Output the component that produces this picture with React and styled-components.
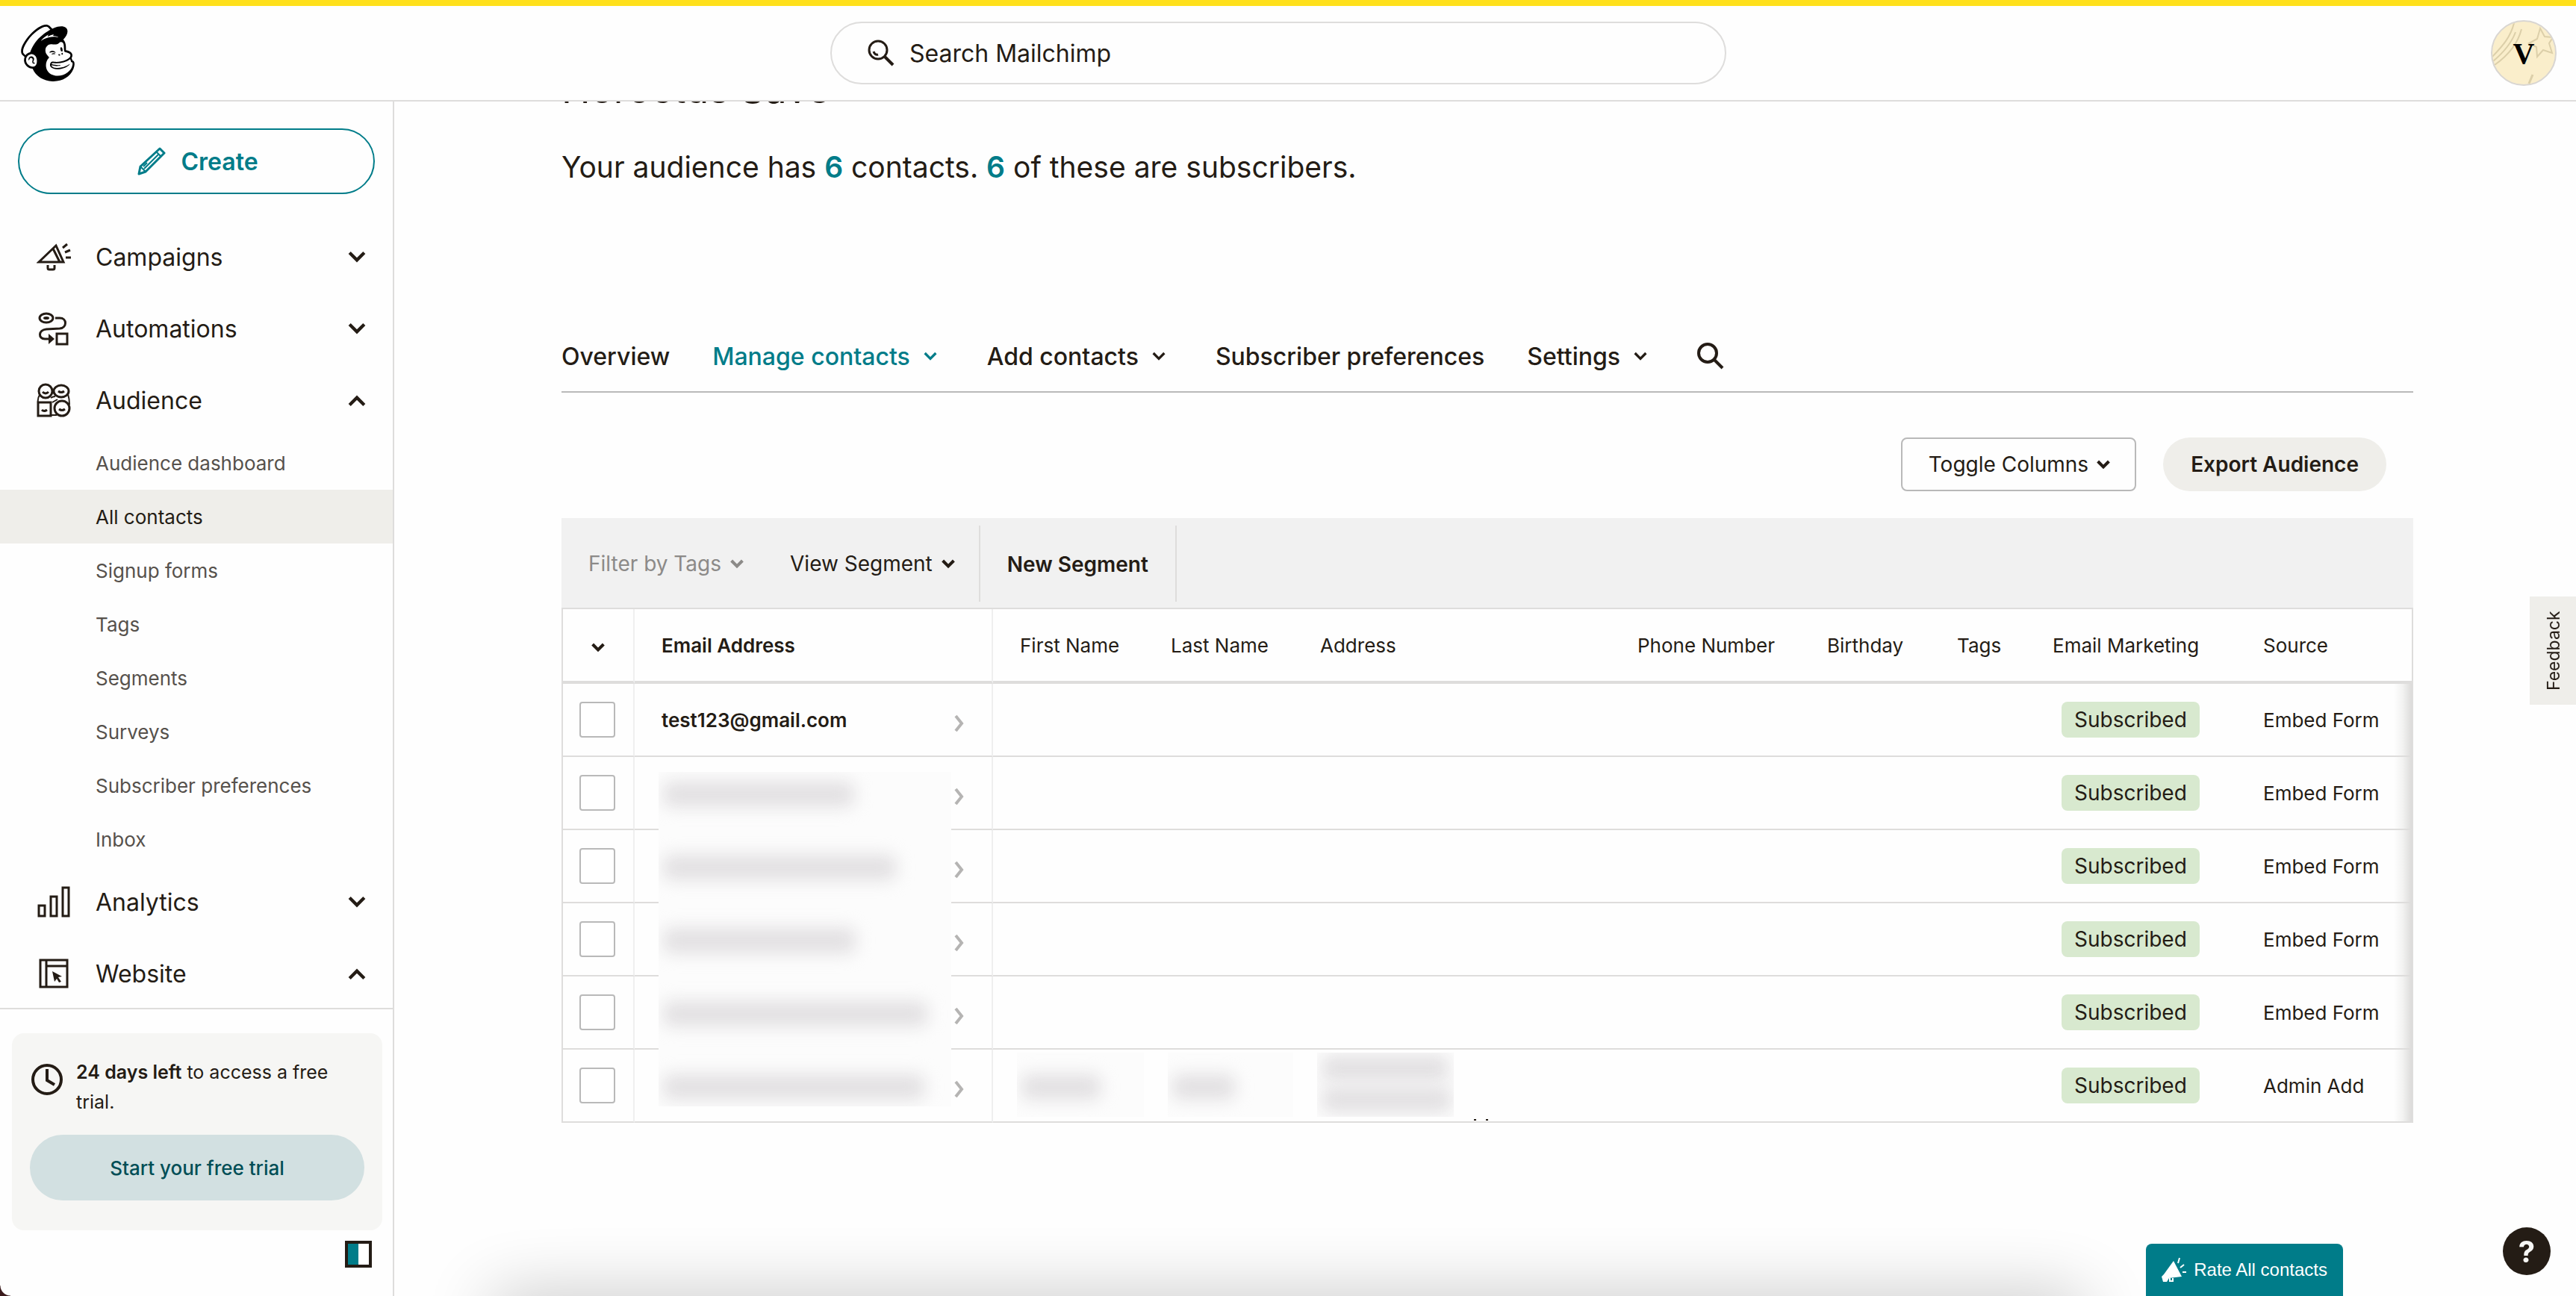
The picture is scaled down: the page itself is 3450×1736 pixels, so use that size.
import React from "react";
import styled, { createGlobalStyle } from "styled-components";
import { SiMailchimp } from "react-icons/si";

const ink = "#241c15";
const teal = "#007c89";
const line = "#dedddc";
const edge = "#b9b9b9";

const GlobalStyle = createGlobalStyle`
  *, *::before, *::after { box-sizing: border-box; }
  html, body, #root { height: 100%; }
  body {
    margin: 0;
    background: #fefefe;
    color: ${ink};
    font-family: Inter, "Liberation Sans", sans-serif;
    font-size: 26px;
    overflow: hidden;
  }
  button, input { font: inherit; color: inherit; }
  button { border: 0; background: none; padding: 0; cursor: pointer; }
  a { color: inherit; text-decoration: none; }
  h1, p, ul { margin: 0; padding: 0; }
  ul { list-style: none; }
  svg { display: block; flex: none; }
`;

/* ---------- shell ---------- */

const Page = styled.div`
  height: 100vh;
  display: flex;
  flex-direction: column;
`;

const Header = styled.header`
  flex: none;
  height: 136px;
  border-top: 8px solid #ffe01b;
  border-bottom: 2px solid ${line};
  padding-right: 26px;
  display: grid;
  grid-template-columns: 1fr 1200px 1fr;
  align-items: center;
`;

const LogoLink = styled.a`
  justify-self: start;
  margin-left: 26px;
  color: #000;
`;

const SearchBox = styled.label`
  height: 84px;
  border: 2px solid ${line};
  border-radius: 42px;
  padding: 0 48px;
  display: flex;
  align-items: center;
  gap: 18px;
`;

const SearchInput = styled.input`
  flex: 1;
  border: 0;
  outline: 0;
  background: none;
  font-size: 32px;
  &::placeholder { color: ${ink}; opacity: 1; }
`;

const Avatar = styled.button`
  justify-self: end;
  width: 88px;
  height: 88px;
  border: 2px solid #d9d6d2;
  border-radius: 50%;
  overflow: hidden;
  display: grid;
  place-items: center;
  background: #faeecb;
  & > * { grid-area: 1 / 1; }
`;

const Initial = styled.span`
  font-family: "Liberation Serif", serif;
  font-weight: 700;
  font-size: 40px;
  color: #000;
`;

const Body = styled.div`
  flex: 1;
  min-height: 0;
  display: flex;
`;

/* ---------- sidebar ---------- */

const Sidebar = styled.aside`
  flex: none;
  width: 528px;
  border-right: 2px solid ${line};
  display: flex;
  flex-direction: column;
`;

const CreateButton = styled.button`
  flex: none;
  height: 88px;
  margin: 36px 24px;
  padding-left: 4px;
  border: 2px solid ${teal};
  border-radius: 44px;
  display: flex;
  align-items: center;
  justify-content: center;
  gap: 20px;
  color: ${teal};
  font-size: 32px;
  font-weight: 600;
`;

const NavList = styled.nav`
  flex: 1;
  min-height: 0;
  overflow: hidden;
`;

const NavButton = styled.button`
  width: 100%;
  height: 96px;
  padding: 0 36px 0 48px;
  display: flex;
  align-items: center;
  text-align: left;
  font-size: 32px;
`;

const NavIcon = styled.span`
  width: 48px;
  margin-right: 32px;
  display: flex;
  justify-content: center;
`;

const NavLabel = styled.span`
  flex: 1;
`;

const SubLink = styled.a`
  display: flex;
  align-items: center;
  height: 72px;
  padding-left: 128px;
  background: ${(p) => (p.$active ? "#efeeea" : "transparent")};
  color: ${(p) => (p.$active ? ink : "#56514c")};
`;

const SideFooter = styled.div`
  flex: none;
  border-top: 2px solid ${line};
  padding: 32px 14px 38px 16px;
  display: flex;
  flex-direction: column;
`;

const TrialCard = styled.section`
  border-radius: 16px;
  background: #f6f6f4;
  padding: 32px 24px 40px;
`;

const TrialNote = styled.div`
  display: flex;
  gap: 18px;
  font-size: 25px;
  line-height: 40px;
  & > svg { margin-top: 8px; }
  & strong { font-weight: 600; }
`;

const TrialButton = styled.button`
  width: 100%;
  height: 88px;
  margin-top: 24px;
  border-radius: 44px;
  background: #d2e0e1;
  color: #004e56;
  font-weight: 500;
`;

const CollapseButton = styled.button`
  align-self: flex-end;
  margin: 14px 14px 0 0;
`;

/* ---------- main ---------- */

const Main = styled.main`
  flex: 1;
  min-width: 0;
  overflow: hidden;
  padding: 0 218px 0 224px;
`;

const Title = styled.h1`
  height: 8px;
  overflow: hidden;
  display: flex;
  align-items: flex-end;
  font-size: 52px;
  line-height: 48px;
  font-weight: 400;
`;

const Summary = styled.p`
  margin-top: 50px;
  font-size: 39px;
  line-height: 60px;
  & a { color: ${teal}; font-weight: 600; }
`;

const Tabs = styled.nav`
  margin-top: 176px;
  height: 96px;
  border-bottom: 2px solid ${edge};
  display: flex;
  align-items: center;
  gap: 57px;
  font-size: 32px;
  font-weight: 500;
`;

const Tab = styled.button`
  display: flex;
  align-items: center;
  gap: 18px;
  padding-right: ${(p) => (p.$menu ? "10px" : "0")};
  color: ${(p) => (p.$active ? teal : ink)};
`;

const Actions = styled.div`
  margin: 60px 36px 36px 0;
  display: flex;
  justify-content: flex-end;
  gap: 36px;
  font-size: 28px;
`;

const ToggleColumns = styled.button`
  height: 72px;
  padding: 0 33px 0 35px;
  border: 2px solid ${edge};
  border-radius: 8px;
  display: flex;
  align-items: center;
  gap: 11px;
`;

const ExportButton = styled.button`
  height: 72px;
  padding: 0 37px;
  border-radius: 36px;
  background: #efeeea;
  font-weight: 600;
`;

const FilterBar = styled.div`
  height: 120px;
  padding: 10px 0 8px 36px;
  background: #f1f1f1;
  display: flex;
  align-items: stretch;
  font-size: 28px;
`;

const FilterButton = styled.button`
  display: flex;
  align-items: center;
  gap: 12px;
  margin-right: ${(p) => (p.$last ? "32px" : "62px")};
  color: ${(p) => (p.$muted ? "#8c8a88" : ink)};
`;

const SegmentButton = styled.button`
  border: solid ${line};
  border-width: 0 2px;
  padding: 2px 36px 0;
  font-weight: 600;
`;

const ContactTable = styled.table`
  width: 100%;
  table-layout: fixed;
  border-collapse: separate;
  border-spacing: 0;
  border: 2px solid ${line};
  border-bottom: 0;
`;

const Col = styled.col`
  width: ${(p) => p.$width};
`;

const HeadCell = styled.th`
  height: 100px;
  padding: 0 0 0 36px;
  border-bottom: 4px solid ${line};
  border-right: ${(p) => (p.$ruled ? "2px solid #efefef" : "0")};
  text-align: left;
  white-space: nowrap;
  font-weight: ${(p) => (p.$strong ? 600 : 400)};
`;

const Cell = styled.td`
  position: relative;
  height: 98px;
  padding: 0 0 0 36px;
  border-bottom: 2px solid ${line};
  border-right: ${(p) => (p.$ruled ? "2px solid #efefef" : "0")};
  white-space: nowrap;
`;

const PickHead = styled(HeadCell)`
  padding-left: 38px;
`;

const PickCell = styled(Cell)`
  padding-left: 22px;
`;

const SourceCell = styled(Cell)`
  background: linear-gradient(to left, #dcdbda, #f2f2f1 12px, rgba(255, 255, 255, 0) 24px);
`;

const Tick = styled.input`
  appearance: none;
  display: block;
  width: 48px;
  height: 48px;
  margin: 0;
  border: 2px solid ${edge};
  border-radius: 4px;
  background: #fff;
`;

const EmailLine = styled.div`
  display: flex;
  align-items: center;
  justify-content: space-between;
  padding-right: 36px;
  & a { font-weight: 600; }
  & svg { margin-top: 10px; }
`;

const Veil = styled.span`
  position: absolute;
  left: 32px;
  right: ${(p) => p.$right || "54px"};
  top: ${(p) => (p.$first ? "20px" : p.$boxed ? "4px" : "0")};
  bottom: ${(p) => (p.$last ? "20px" : p.$boxed ? "6px" : "-2px")};
  background: #fcfcfc;
  overflow: hidden;
`;

const Smudge = styled.span`
  position: absolute;
  left: 6px;
  top: ${(p) => p.$top}px;
  width: ${(p) => p.$width}px;
  height: ${(p) => p.$height || 34}px;
  border-radius: 10px;
  background: #e2e0e2;
  filter: blur(11px);
`;

const Speck = styled.svg`
  position: absolute;
  left: 242px;
  bottom: 0;
`;

const Badge = styled.span`
  display: inline-block;
  margin-left: 12px;
  padding: 0 17px;
  border-radius: 8px;
  background: #d8e9cf;
  font-size: 28px;
  line-height: 48px;
`;

/* ---------- floating pieces ---------- */

const FeedbackTab = styled.button`
  position: fixed;
  right: 0;
  top: 799px;
  width: 62px;
  height: 145px;
  padding-right: 2px;
  background: #efeeea;
  writing-mode: vertical-rl;
  transform: rotate(180deg);
  font-size: 23px;
  text-align: center;
`;

const RateButton = styled.button`
  position: fixed;
  right: 312px;
  bottom: 0;
  height: 70px;
  padding: 0 21px 0 20px;
  border-radius: 8px 8px 0 0;
  background: ${teal};
  color: #fff;
  display: flex;
  align-items: center;
  gap: 10px;
  font-family: "Liberation Sans", Arial, sans-serif;
  font-size: 24px;
`;

const HelpButton = styled.button`
  position: fixed;
  right: 34px;
  bottom: 28px;
  width: 64px;
  height: 64px;
  border-radius: 50%;
  background: ${ink};
  color: #f6f6f4;
  font-size: 40px;
  font-weight: 700;
`;

const DockShadow = styled.div`
  position: fixed;
  left: 680px;
  right: 680px;
  bottom: -50px;
  height: 30px;
  box-shadow: 0 0 90px 20px rgba(0, 0, 0, 0.24);
`;

const WindowCorner = styled.div`
  position: fixed;
  left: 0;
  bottom: 0;
  width: 14px;
  height: 14px;
  background: radial-gradient(circle at 100% 0, transparent 13px, #3a1a1c 14px);
`;

/* ---------- icons ---------- */

const Chevron = ({ up, size = 22, weight = 4 }) => (
  <svg width={size} height={Math.round(size * 0.7)} viewBox="0 0 22 15" fill="none" stroke="currentColor" strokeWidth={weight} aria-hidden="true">
    <path d={up ? "M2 13 11 4l9 9" : "M2 2l9 9 9-9"} />
  </svg>
);

const ArrowRight = () => (
  <svg width="14" height="24" viewBox="0 0 14 24" fill="none" stroke="#b5b4b3" strokeWidth="4" aria-hidden="true">
    <path d="M2 2l8 10-8 10" />
  </svg>
);

const Lens = ({ glint }) => (
  <svg width="36" height="36" viewBox="0 0 36 36" fill="none" stroke="currentColor" strokeWidth={glint ? 3 : 4} aria-hidden="true">
    <circle cx="14" cy="14" r="12" />
    <path d="M23 23l11 11" strokeWidth="4" />
    {glint && <path d="M8 16c1 3 3 5 6 4" strokeWidth="3" />}
  </svg>
);

const Pencil = () => (
  <svg width="38" height="38" viewBox="0 0 38 38" fill="none" stroke="currentColor" strokeWidth="3" strokeLinejoin="round" aria-hidden="true">
    <path d="M2 36l2-10L30 2l6 6-25 25z" />
    <path d="M4 26l7 7M25 6l7 7M9 29L28 10M8 26l5-5" strokeWidth="2" />
  </svg>
);

const Megaphone = () => (
  <svg width="46" height="38" viewBox="0 0 46 38" fill="none" stroke="currentColor" strokeWidth="3" aria-hidden="true">
    <path d="M3 26L26 4l10 22zM22 8l9 18" />
    <path d="M15 30v4q0 2 2 2h5q2 0 2-2v-4M35 7l6-5M38 13l7-3M39 20h7" />
  </svg>
);

const Flow = () => (
  <svg width="42" height="45" viewBox="0 0 42 45" fill="none" stroke="currentColor" strokeWidth="3" aria-hidden="true">
    <ellipse cx="11" cy="8" rx="9" ry="6" />
    <ellipse cx="11" cy="8" rx="4" ry="2" fill="currentColor" stroke="none" />
    <path d="M23 8h6c10 0 10 13 0 14l-18 1c-11 1-11 13-2 13h7" />
    <path d="M14 29l8 7-8 7z" fill="currentColor" stroke="none" />
    <path d="M25 29h14v14H25z" />
  </svg>
);

const Faces = () => (
  <svg width="46" height="46" viewBox="0 0 46 46" fill="none" stroke="currentColor" strokeWidth="3" aria-hidden="true">
    <circle cx="12" cy="11" r="9" />
    <ellipse cx="33" cy="11" rx="10" ry="8" />
    <path d="M2 26h17v18H2z" />
    <circle cx="34" cy="34" r="10" />
    <path d="M4 16q-3 5-2 10M42 15q2 6 2 14M19 43h8M19 20q3-2 6-2M21 26l7-4" strokeWidth="2" />
    <path d="M8 12q4 4 8 0M29 11q4 3 8 0M7 36q3 3 7 0M30 35q4 3 8 0" />
  </svg>
);

const Bars = () => (
  <svg width="44" height="42" viewBox="0 0 44 42" fill="none" stroke="currentColor" strokeWidth="3" aria-hidden="true">
    <path d="M2 26h8v14H2zM18 14h8v26h-8zM34 2h8v38h-8z" />
  </svg>
);

const SiteIcon = () => (
  <svg width="40" height="40" viewBox="0 0 40 40" fill="none" stroke="currentColor" strokeWidth="3" aria-hidden="true">
    <path d="M2 2h36v36H2zM10 2v36M10 10h28" />
    <path d="M18 17l13 7-5 1 4 6-3 1-3-5-3 4z" fill="currentColor" stroke="none" />
  </svg>
);

const Clock = () => (
  <svg width="44" height="44" viewBox="0 0 44 44" fill="none" stroke={ink} strokeWidth="4" aria-hidden="true">
    <circle cx="23" cy="22" r="19" />
    <path d="M23 8v15l10 6" />
  </svg>
);

const PanelIcon = () => (
  <svg width="36" height="36" viewBox="0 0 36 36" aria-hidden="true">
    <path d="M2 2h32v32H2z" fill="#fff" />
    <path d="M2 2h16v32H2z" fill={teal} />
    <path d="M2 2h32v32H2z" fill="none" stroke={ink} strokeWidth="4" />
  </svg>
);

const RateIcon = () => (
  <svg width="34" height="34" viewBox="0 0 34 34" fill="#fff" aria-hidden="true">
    <path d="M17 5l11 21-17 2-3 5H3l-2-7 3-3z" />
    <path d="M12 28v4h4v-4" fill="none" stroke="#fff" strokeWidth="2" />
    <path d="M23 8l2-7M26 14l5-4M29 20h5" stroke="#fff" strokeWidth="2" />
  </svg>
);

const AvatarArt = () => (
  <svg width="84" height="84" viewBox="0 0 84 84" fill="none" stroke="#dccfa9" strokeWidth="2" aria-hidden="true">
    <path d="M0 47C12 34 24 22 29 2M1 53C14 42 26 28 31 14M3 58C20 46 34 30 39 10" />
    <path d="M64 9l6 11 11 1-5 8 4 13-12-4-8 9-1-13-10-5 11-6z" />
    <path d="M49 83l5-12" strokeWidth="3" />
  </svg>
);

/* ---------- data ---------- */

const audienceLinks = [
  "Audience dashboard",
  "All contacts",
  "Signup forms",
  "Tags",
  "Segments",
  "Surveys",
  "Subscriber preferences",
  "Inbox",
];

const columns = [
  "First Name",
  "Last Name",
  "Address",
  "Phone Number",
  "Birthday",
  "Tags",
  "Email Marketing",
  "Source",
];

const widths = ["96px", "480px", "202px", "200px", "auto", "254px", "174px", "128px", "282px", "235px"];

const contacts = [
  { email: "test123@gmail.com", source: "Embed Form" },
  { hidden: 256, first: true, source: "Embed Form" },
  { hidden: 312, source: "Embed Form" },
  { hidden: 258, source: "Embed Form" },
  { hidden: 354, source: "Embed Form" },
  { hidden: 350, last: true, source: "Admin Add" },
];

const NavItem = ({ icon, label, open }) => (
  <NavButton type="button" aria-expanded={Boolean(open)}>
    <NavIcon>{icon}</NavIcon>
    <NavLabel>{label}</NavLabel>
    <Chevron up={open} size={24} />
  </NavButton>
);

const ContactRow = ({ contact, index }) => (
  <tr>
    <PickCell $ruled>
      <Tick type="checkbox" aria-label={`Select contact ${index + 1}`} />
    </PickCell>
    <Cell $ruled>
      <EmailLine>
        <a href="#contact">{contact.email}</a>
        <ArrowRight />
      </EmailLine>
      {contact.hidden && (
        <Veil $first={contact.first} $last={contact.last}>
          <Smudge $top={contact.first ? 13 : 33} $width={contact.hidden} />
        </Veil>
      )}
    </Cell>
    <Cell>
      {contact.last && (
        <Veil $boxed $right="0px">
          <Smudge $top={29} $width={106} />
        </Veil>
      )}
    </Cell>
    <Cell>
      {contact.last && (
        <Veil $boxed $right="0px">
          <Smudge $top={29} $width={84} />
        </Veil>
      )}
    </Cell>
    <Cell>
      {contact.last && (
        <>
          <Veil $boxed $right="210px">
            <Smudge $top={4} $width={170} />
            <Smudge $top={46} $width={174} />
          </Veil>
          <Speck width="20" height="4" viewBox="0 0 20 4" fill={ink} aria-hidden="true">
            <path d="M0 1h3v2H0zM16 1h3v2h-3z" />
          </Speck>
        </>
      )}
    </Cell>
    <Cell />
    <Cell />
    <Cell />
    <Cell>
      <Badge>Subscribed</Badge>
    </Cell>
    <SourceCell>{contact.source}</SourceCell>
  </tr>
);

export default function App() {
  return (
    <Page>
      <GlobalStyle />
      <Header>
        <LogoLink href="#home" aria-label="Mailchimp home">
          <SiMailchimp size={76} />
        </LogoLink>
        <SearchBox>
          <Lens glint />
          <SearchInput type="text" placeholder="Search Mailchimp" aria-label="Search Mailchimp" />
        </SearchBox>
        <Avatar type="button" aria-label="Account">
          <AvatarArt />
          <Initial>V</Initial>
        </Avatar>
      </Header>

      <Body>
        <Sidebar>
          <CreateButton type="button">
            <Pencil />
            Create
          </CreateButton>
          <NavList aria-label="Primary">
            <NavItem icon={<Megaphone />} label="Campaigns" />
            <NavItem icon={<Flow />} label="Automations" />
            <NavItem icon={<Faces />} label="Audience" open />
            <ul>
              {audienceLinks.map((label) => (
                <li key={label}>
                  <SubLink href="#audience" $active={label === "All contacts"}>{label}</SubLink>
                </li>
              ))}
            </ul>
            <NavItem icon={<Bars />} label="Analytics" />
            <NavItem icon={<SiteIcon />} label="Website" open />
          </NavList>
          <SideFooter>
            <TrialCard>
              <TrialNote>
                <Clock />
                <p><strong>24 days left</strong> to access a free trial.</p>
              </TrialNote>
              <TrialButton type="button">Start your free trial</TrialButton>
            </TrialCard>
            <CollapseButton type="button" aria-label="Collapse navigation">
              <PanelIcon />
            </CollapseButton>
          </SideFooter>
        </Sidebar>

        <Main>
          <Title>Horoctus Save</Title>
          <Summary>
            Your audience has <a href="#contacts">6</a> contacts. <a href="#subscribers">6</a> of these are subscribers.
          </Summary>
          <Tabs aria-label="Audience">
            <Tab type="button">Overview</Tab>
            <Tab type="button" $menu $active>Manage contacts <Chevron size={18} /></Tab>
            <Tab type="button" $menu>Add contacts <Chevron size={18} /></Tab>
            <Tab type="button">Subscriber preferences</Tab>
            <Tab type="button" $menu>Settings <Chevron size={18} /></Tab>
            <Tab type="button" aria-label="Search contacts"><Lens /></Tab>
          </Tabs>
          <Actions>
            <ToggleColumns type="button">Toggle Columns <Chevron size={18} weight={5} /></ToggleColumns>
            <ExportButton type="button">Export Audience</ExportButton>
          </Actions>
          <FilterBar>
            <FilterButton type="button" $muted>Filter by Tags <Chevron size={18} weight={5} /></FilterButton>
            <FilterButton type="button" $last>View Segment <Chevron size={18} weight={5} /></FilterButton>
            <SegmentButton type="button">New Segment</SegmentButton>
          </FilterBar>
          <ContactTable>
            <colgroup>
              {widths.map((w, i) => <Col key={i} $width={w} />)}
            </colgroup>
            <thead>
              <tr>
                <PickHead $ruled>
                  <button type="button" aria-label="Selection options"><Chevron size={18} weight={5} /></button>
                </PickHead>
                <HeadCell $ruled $strong>Email Address</HeadCell>
                {columns.map((name) => <HeadCell key={name}>{name}</HeadCell>)}
              </tr>
            </thead>
            <tbody>
              {contacts.map((c, i) => <ContactRow key={i} contact={c} index={i} />)}
            </tbody>
          </ContactTable>
        </Main>
      </Body>

      <DockShadow />
      <WindowCorner />
      <FeedbackTab type="button">Feedback</FeedbackTab>
      <RateButton type="button"><RateIcon />Rate All contacts</RateButton>
      <HelpButton type="button" aria-label="Help">?</HelpButton>
    </Page>
  );
}
